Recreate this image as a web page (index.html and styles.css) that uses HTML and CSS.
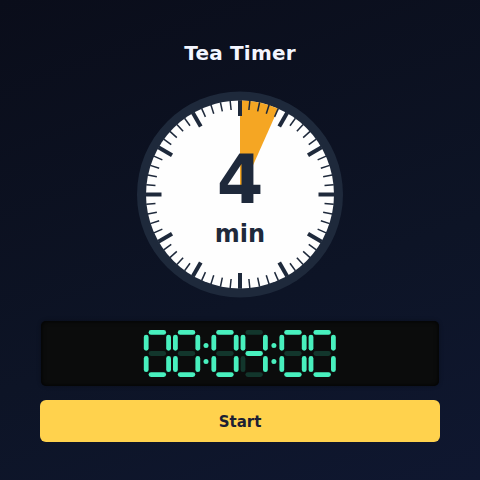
FILE: index.html
```html
<!DOCTYPE html>
<html lang="en">
<head>
<meta charset="utf-8">
<title>Tea Timer</title>
<link rel="stylesheet" href="styles.css">
</head>
<body>
<main class="timer">
  <h1 class="title">Tea Timer</h1>
  <svg class="dial" viewBox="-103 -102.5 206 206">
    <circle class="rim" r="103"/>
    <circle class="face" r="94"/>
    <path class="wedge" d="M0 0V-94A94 94 0 0 1 38.23 -85.87Z"/>
    <g id="ticks"></g>
    <text class="amount" x="0" y="8.5">4</text>
    <text class="unit" x="0" y="47">min</text>
  </svg>
  <div class="display">
    <svg class="digits" id="digits" viewBox="0 0 192 48"></svg>
  </div>
  <button class="start" type="button">Start</button>
</main>
<script src="timer.js"></script>
</body>
</html>
```
FILE: styles.css
```css
* {
  box-sizing: border-box;
}

body {
  margin: 0;
  height: 480px;
  overflow: hidden;
  background: linear-gradient(160deg, #0a0d1a 0%, #0d1426 60%, #0f1730 100%);
  font-family: "DejaVu Sans", sans-serif;
}

.timer {
  display: flex;
  flex-direction: column;
  align-items: center;
  padding: 41px 40px 0;
}

.title {
  margin: 0 0 27px;
  color: #f4f6ff;
  font-size: 20px;
  line-height: 24px;
  font-weight: 700;
  letter-spacing: 0.2px;
}

.dial {
  display: block;
  width: 206px;
  height: 206px;
  margin-bottom: 23px;
  overflow: visible;
}

.rim {
  fill: #1e293b;
}

.face {
  fill: #fefefe;
}

.wedge {
  fill: #f5a623;
}

.tick {
  stroke: #1e293b;
  stroke-width: 1.5;
}

.tick-major {
  stroke-width: 4;
}

.amount,
.unit {
  fill: #1e293b;
  font-weight: 700;
  text-anchor: middle;
}

.amount {
  font-size: 67.2px;
}

.unit {
  font-size: 24px;
}

.display {
  display: flex;
  justify-content: center;
  width: 398px;
  height: 65px;
  margin-bottom: 14.4px;
  padding-top: 9px;
  border-radius: 5px;
  background: #0b0c0c;
  box-shadow: inset 0 0 5px #000, 0 0 4px rgba(0, 0, 0, 0.3);
}

.digits {
  width: 192px;
  height: 48px;
  overflow: visible;
}

.segment {
  fill: #12362c;
}

.lit {
  fill: #48f0be;
}

.start {
  width: 400px;
  height: 42px;
  padding: 1px 0 0;
  border: 0;
  border-radius: 6px;
  background: #ffd24d;
  color: #1c2033;
  font: 700 15px "DejaVu Sans", sans-serif;
}
```
FILE: timer.js
```js
const NS = 'http://www.w3.org/2000/svg';

function add(parent, name, attributes) {
  const node = document.createElementNS(NS, name);
  for (const key in attributes) node.setAttribute(key, attributes[key]);
  parent.appendChild(node);
}

const ticks = document.getElementById('ticks');
for (let i = 0; i < 60; i++) {
  const major = i % 5 === 0;
  add(ticks, 'line', {
    class: major ? 'tick tick-major' : 'tick',
    y1: -94.3,
    y2: major ? -78.5 : -85,
    transform: `rotate(${i * 6})`
  });
}

const segments = {
  a: [4.8, 0, 17.5, 4.8],
  b: [22.4, 4.7, 4.8, 16],
  c: [22.4, 26.1, 4.8, 16],
  d: [4.8, 42.2, 17.5, 4.8],
  e: [0, 26.1, 4.8, 16],
  f: [0, 4.7, 4.8, 16],
  g: [4.8, 21.1, 17.5, 4.8]
};
const shapes = { 0: 'abcdef', 4: 'bcfg' };
const digits = document.getElementById('digits');
const starts = [-0.2, 29, 67.4, 96.6, 135.4, 164.6];

[...'000400'].forEach((digit, index) => {
  for (const key in segments) {
    const [x, y, width, height] = segments[key];
    add(digits, 'rect', {
      class: shapes[digit].includes(key) ? 'segment lit' : 'segment',
      x: starts[index] + x, y, width, height, rx: 2.4
    });
  }
});

for (const cx of [62, 129.9]) {
  for (const cy of [15.4, 31.5]) add(digits, 'circle', { class: 'lit', cx, cy, r: 2.5 });
}
```
